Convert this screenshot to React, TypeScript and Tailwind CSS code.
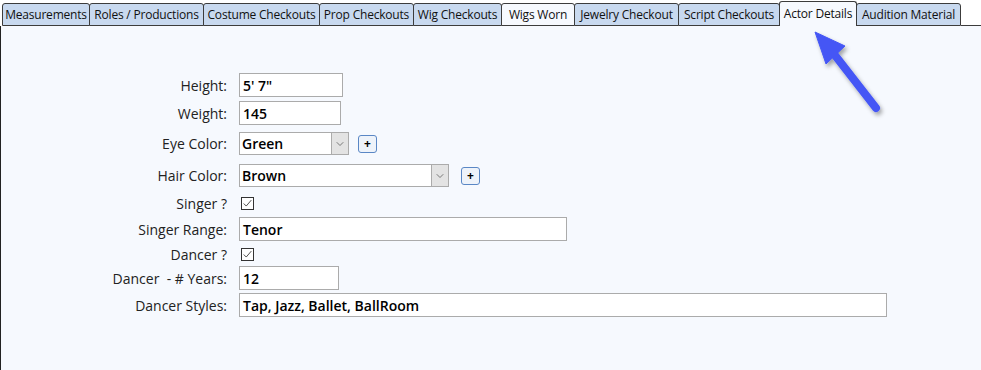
import { ChevronDown } from 'lucide-react'

const TABS = [
  { label: 'Measurements', w: 'w-[88px]' },
  { label: 'Roles / Productions', w: 'w-[115px]' },
  { label: 'Costume Checkouts', w: 'w-[117px]' },
  { label: 'Prop Checkouts', w: 'w-[95px]' },
  { label: 'Wig Checkouts', w: 'w-[89px]' },
  { label: 'Wigs Worn', w: 'w-[74px]', hover: true },
  { label: 'Jewelry Checkout', w: 'w-[105px]' },
  { label: 'Script Checkouts', w: 'w-[102px]' },
  { label: 'Actor Details', w: 'w-[78px]', active: true },
  { label: 'Audition Material', w: 'w-[105px]' },
]

function Label({ children }: { children: React.ReactNode }) {
  return <div className="w-[228px] pr-[2px] text-right text-[14px] text-[#222]">{children}</div>
}

function TextBox({ value, w }: { value: string; w: string }) {
  return (
    <div className={`ml-[10px] flex h-[24px] items-center border border-[#ababab] bg-white px-[3px] text-[14px] font-semibold text-black ${w}`}>
      {value}
    </div>
  )
}

function Select({ value, w }: { value: string; w: string }) {
  return (
    <div className={`ml-[10px] flex h-[23px] border border-[#ababab] bg-white ${w}`}>
      <div className="flex flex-1 items-center px-[2px] text-[14px] font-semibold text-black">{value}</div>
      <div className="flex w-[17px] items-center justify-center border-l border-[#ababab] bg-[#e3e3e3]">
        <ChevronDown className="h-3 w-3 text-[#555]" strokeWidth={1.5} />
      </div>
    </div>
  )
}

function PlusButton({ ml }: { ml: string }) {
  return (
    <div className={`flex h-[18px] w-[19px] items-center justify-center rounded-[3px] border border-[#5a87c5] bg-[#eef3fa] text-[12px] font-bold leading-none text-black ${ml}`}>
      +
    </div>
  )
}

function Check() {
  return (
    <div className="ml-[12px] flex h-[13px] w-[13px] items-center justify-center border border-[#333] bg-white">
      <svg viewBox="0 0 13 13" className="h-[11px] w-[11px]">
        <path d="M2 6.5 L5 9.5 L11 2.5" fill="none" stroke="#444" strokeWidth="1.1" />
      </svg>
    </div>
  )
}

export default function App() {
  return (
    <div className="relative h-[370px] w-[981px] overflow-hidden bg-white" style={{ fontFamily: '"Open Sans", "Noto Sans", sans-serif' }}>
      {/* Tab strip */}
      <div className="flex h-[26px] items-end pl-[2px]">
        {TABS.map((t) => (
          <div
            key={t.label}
            className={`flex items-center justify-center rounded-t-[3px] border border-[#3c3c3c] text-[12px] font-medium tracking-[-0.2px] text-[#111] ${t.w} -ml-px first:ml-0 ${
              t.active
                ? 'relative z-10 h-[25px] border-b-0 bg-[#f6f9fe]'
                : t.hover
                ? 'h-[23px] bg-[#f6f9fe]'
                : 'h-[23px] bg-[#c8d9ef]'
            }`}
          >
            {t.label}
          </div>
        ))}
        <div className="h-px flex-1 bg-[#3c3c3c]" />
      </div>

      {/* Content */}
      <div className="h-[344px] border-l border-[#222] bg-[#f6f9fe] pt-[47px]">
        <div className="flex items-center">
          <Label>Height:</Label>
          <TextBox value={'5\' 7"'} w="w-[104px]" />
        </div>
        <div className="mt-[4px] flex items-center">
          <Label>Weight:</Label>
          <TextBox value="145" w="w-[102px]" />
        </div>
        <div className="mt-[7px] flex items-center">
          <Label>Eye Color:</Label>
          <Select value="Green" w="w-[110px]" />
          <PlusButton ml="ml-[9px]" />
        </div>
        <div className="mt-[9px] flex items-center">
          <Label>Hair Color:</Label>
          <Select value="Brown" w="w-[210px]" />
          <PlusButton ml="ml-[12px]" />
        </div>
        <div className="mt-[8px] flex h-[17px] items-center">
          <Label>Singer ?</Label>
          <Check />
        </div>
        <div className="mt-[5px] flex items-center">
          <Label>Singer Range:</Label>
          <TextBox value="Tenor" w="w-[328px]" />
        </div>
        <div className="mt-[5px] flex h-[17px] items-center">
          <Label>Dancer ?</Label>
          <Check />
        </div>
        <div className="mt-[3px] flex items-center">
          <Label>Dancer&nbsp; - # Years:</Label>
          <TextBox value="12" w="w-[100px]" />
        </div>
        <div className="mt-[3px] flex items-center">
          <Label>Dancer Styles:</Label>
          <TextBox value="Tap, Jazz, Ballet, BallRoom" w="w-[648px]" />
        </div>
      </div>

      {/* Annotation arrow */}
      <svg className="pointer-events-none absolute left-[800px] top-[26px]" width="100" height="100" viewBox="0 0 100 100">
        <defs>
          <filter id="sh" x="-30%" y="-30%" width="160%" height="160%">
            <feDropShadow dx="2" dy="3" stdDeviation="2" floodColor="#000" floodOpacity="0.35" />
          </filter>
        </defs>
        <g filter="url(#sh)" fill="#4557f5" stroke="#4557f5">
          <line x1="76" y1="82" x2="34" y2="28" strokeWidth="8" strokeLinecap="round" />
          <polygon points="15,6 45,20 26,38" strokeWidth="1" strokeLinejoin="round" />
        </g>
      </svg>
    </div>
  )
}
